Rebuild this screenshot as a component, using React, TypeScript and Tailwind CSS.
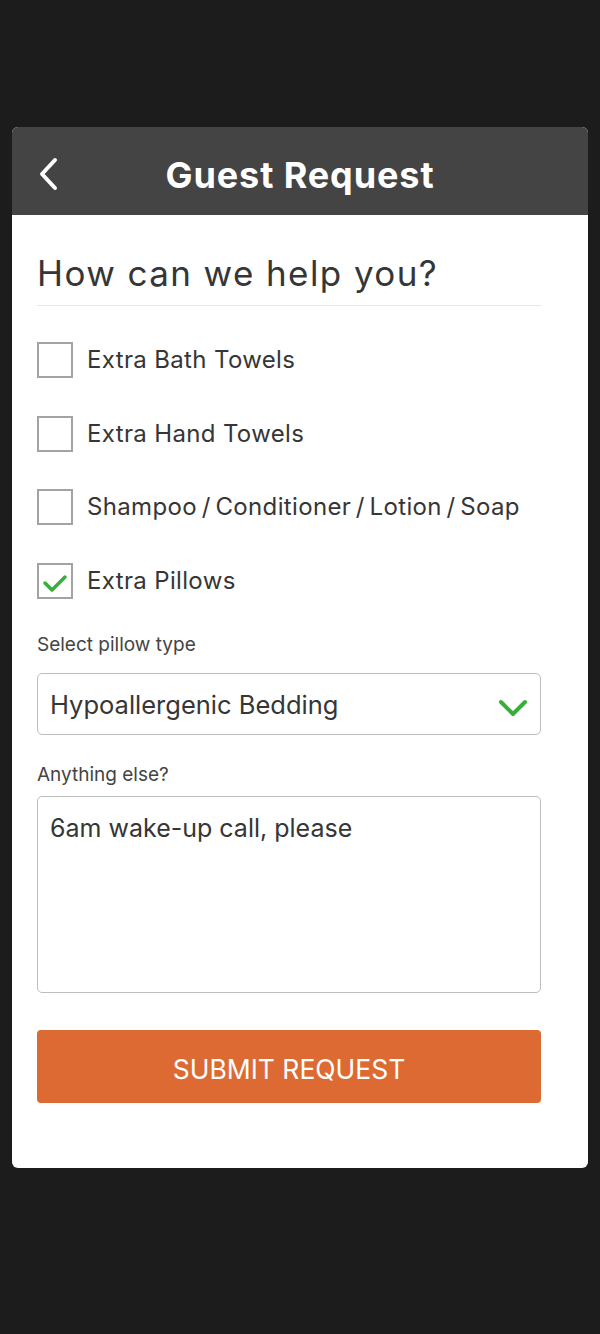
import React from "react";

const font = { fontFamily: "Inter, 'Liberation Sans', sans-serif" };

const items = [
  { label: "Extra Bath Towels", checked: false },
  { label: "Extra Hand Towels", checked: false },
  { label: "Shampoo\u2009/\u2009Conditioner\u2009/\u2009Lotion\u2009/\u2009Soap", checked: false },
  { label: "Extra Pillows", checked: true },
];

function Checkbox({ checked }: { checked: boolean }) {
  return (
    <div className="flex h-[36px] w-[36px] shrink-0 items-center justify-center border-2 border-[#a3a3a3] bg-white">
      {checked && (
        <svg width="26" height="20" viewBox="0 0 26 20" fill="none" className="mt-[6px]">
          <polyline points="3,9 10,16 23,3" stroke="#3aae3a" strokeWidth="3.5" strokeLinecap="round" strokeLinejoin="round" />
        </svg>
      )}
    </div>
  );
}

export default function App() {
  return (
    <div className="min-h-[1334px] bg-[#1c1c1c] px-[12px] pt-[127px] text-[#363636]" style={font}>
      <div className="overflow-hidden rounded-[6px] bg-white">
        <header className="relative flex h-[88px] items-center justify-center bg-[#444444]">
          <button className="absolute left-[24px] top-[30px] flex h-[34px] w-[24px] items-center justify-center">
            <svg width="22" height="34" viewBox="0 0 22 34" fill="none">
              <polyline points="18,3 5,17 18,31" stroke="white" strokeWidth="4" strokeLinecap="round" strokeLinejoin="round" />
            </svg>
          </button>
          <h1 className="mt-[7px] text-[36px] font-bold tracking-[0.9px] text-white">Guest Request</h1>
        </header>

        <div className="pb-[65px] pl-[25px] pr-[47px] pt-[36px]">
          <h2 className="border-b border-[#e6e6e6] pb-[10px] text-[35px] font-normal leading-[44px] tracking-[1.4px] text-[#363636]">
            How can we help you?
          </h2>

          <div className="mt-[36px] flex flex-col gap-[37.5px]">
            {items.map((it) => (
              <label key={it.label} className="flex h-[36px] items-center gap-[14px]">
                <Checkbox checked={it.checked} />
                <span className="text-[24px] leading-none tracking-[0.35px]">{it.label}</span>
              </label>
            ))}
          </div>

          <div className="mt-[34px] text-[19px] leading-[24px] text-[#444]">Select pillow type</div>
          <div className="mt-[16px] flex h-[62px] items-center justify-between rounded-[5px] border border-[#bdbdbd] pl-[12px] pr-[12px]">
            <span className="mt-[3px] text-[25.5px]">Hypoallergenic Bedding</span>
            <svg width="30" height="18" viewBox="0 0 30 18" fill="none" className="mt-[8px]">
              <polyline points="3,3 15,15 27,3" stroke="#3aae3a" strokeWidth="4" strokeLinecap="round" strokeLinejoin="round" />
            </svg>
          </div>

          <div className="mt-[28px] text-[19px] leading-[24px] text-[#444]">Anything else?</div>
          <div className="mt-[9px] h-[197px] rounded-[5px] border border-[#bdbdbd] px-[12px] pt-[15px]">
            <span className="text-[25px] leading-[32px]">6am wake-up call, please</span>
          </div>

          <button className="mt-[37px] flex h-[73px] w-full items-center justify-center rounded-[4px] bg-[#dc6a32] pt-[8px] text-[26.5px] font-normal text-white">
            SUBMIT REQUEST
          </button>
        </div>
      </div>
    </div>
  );
}
